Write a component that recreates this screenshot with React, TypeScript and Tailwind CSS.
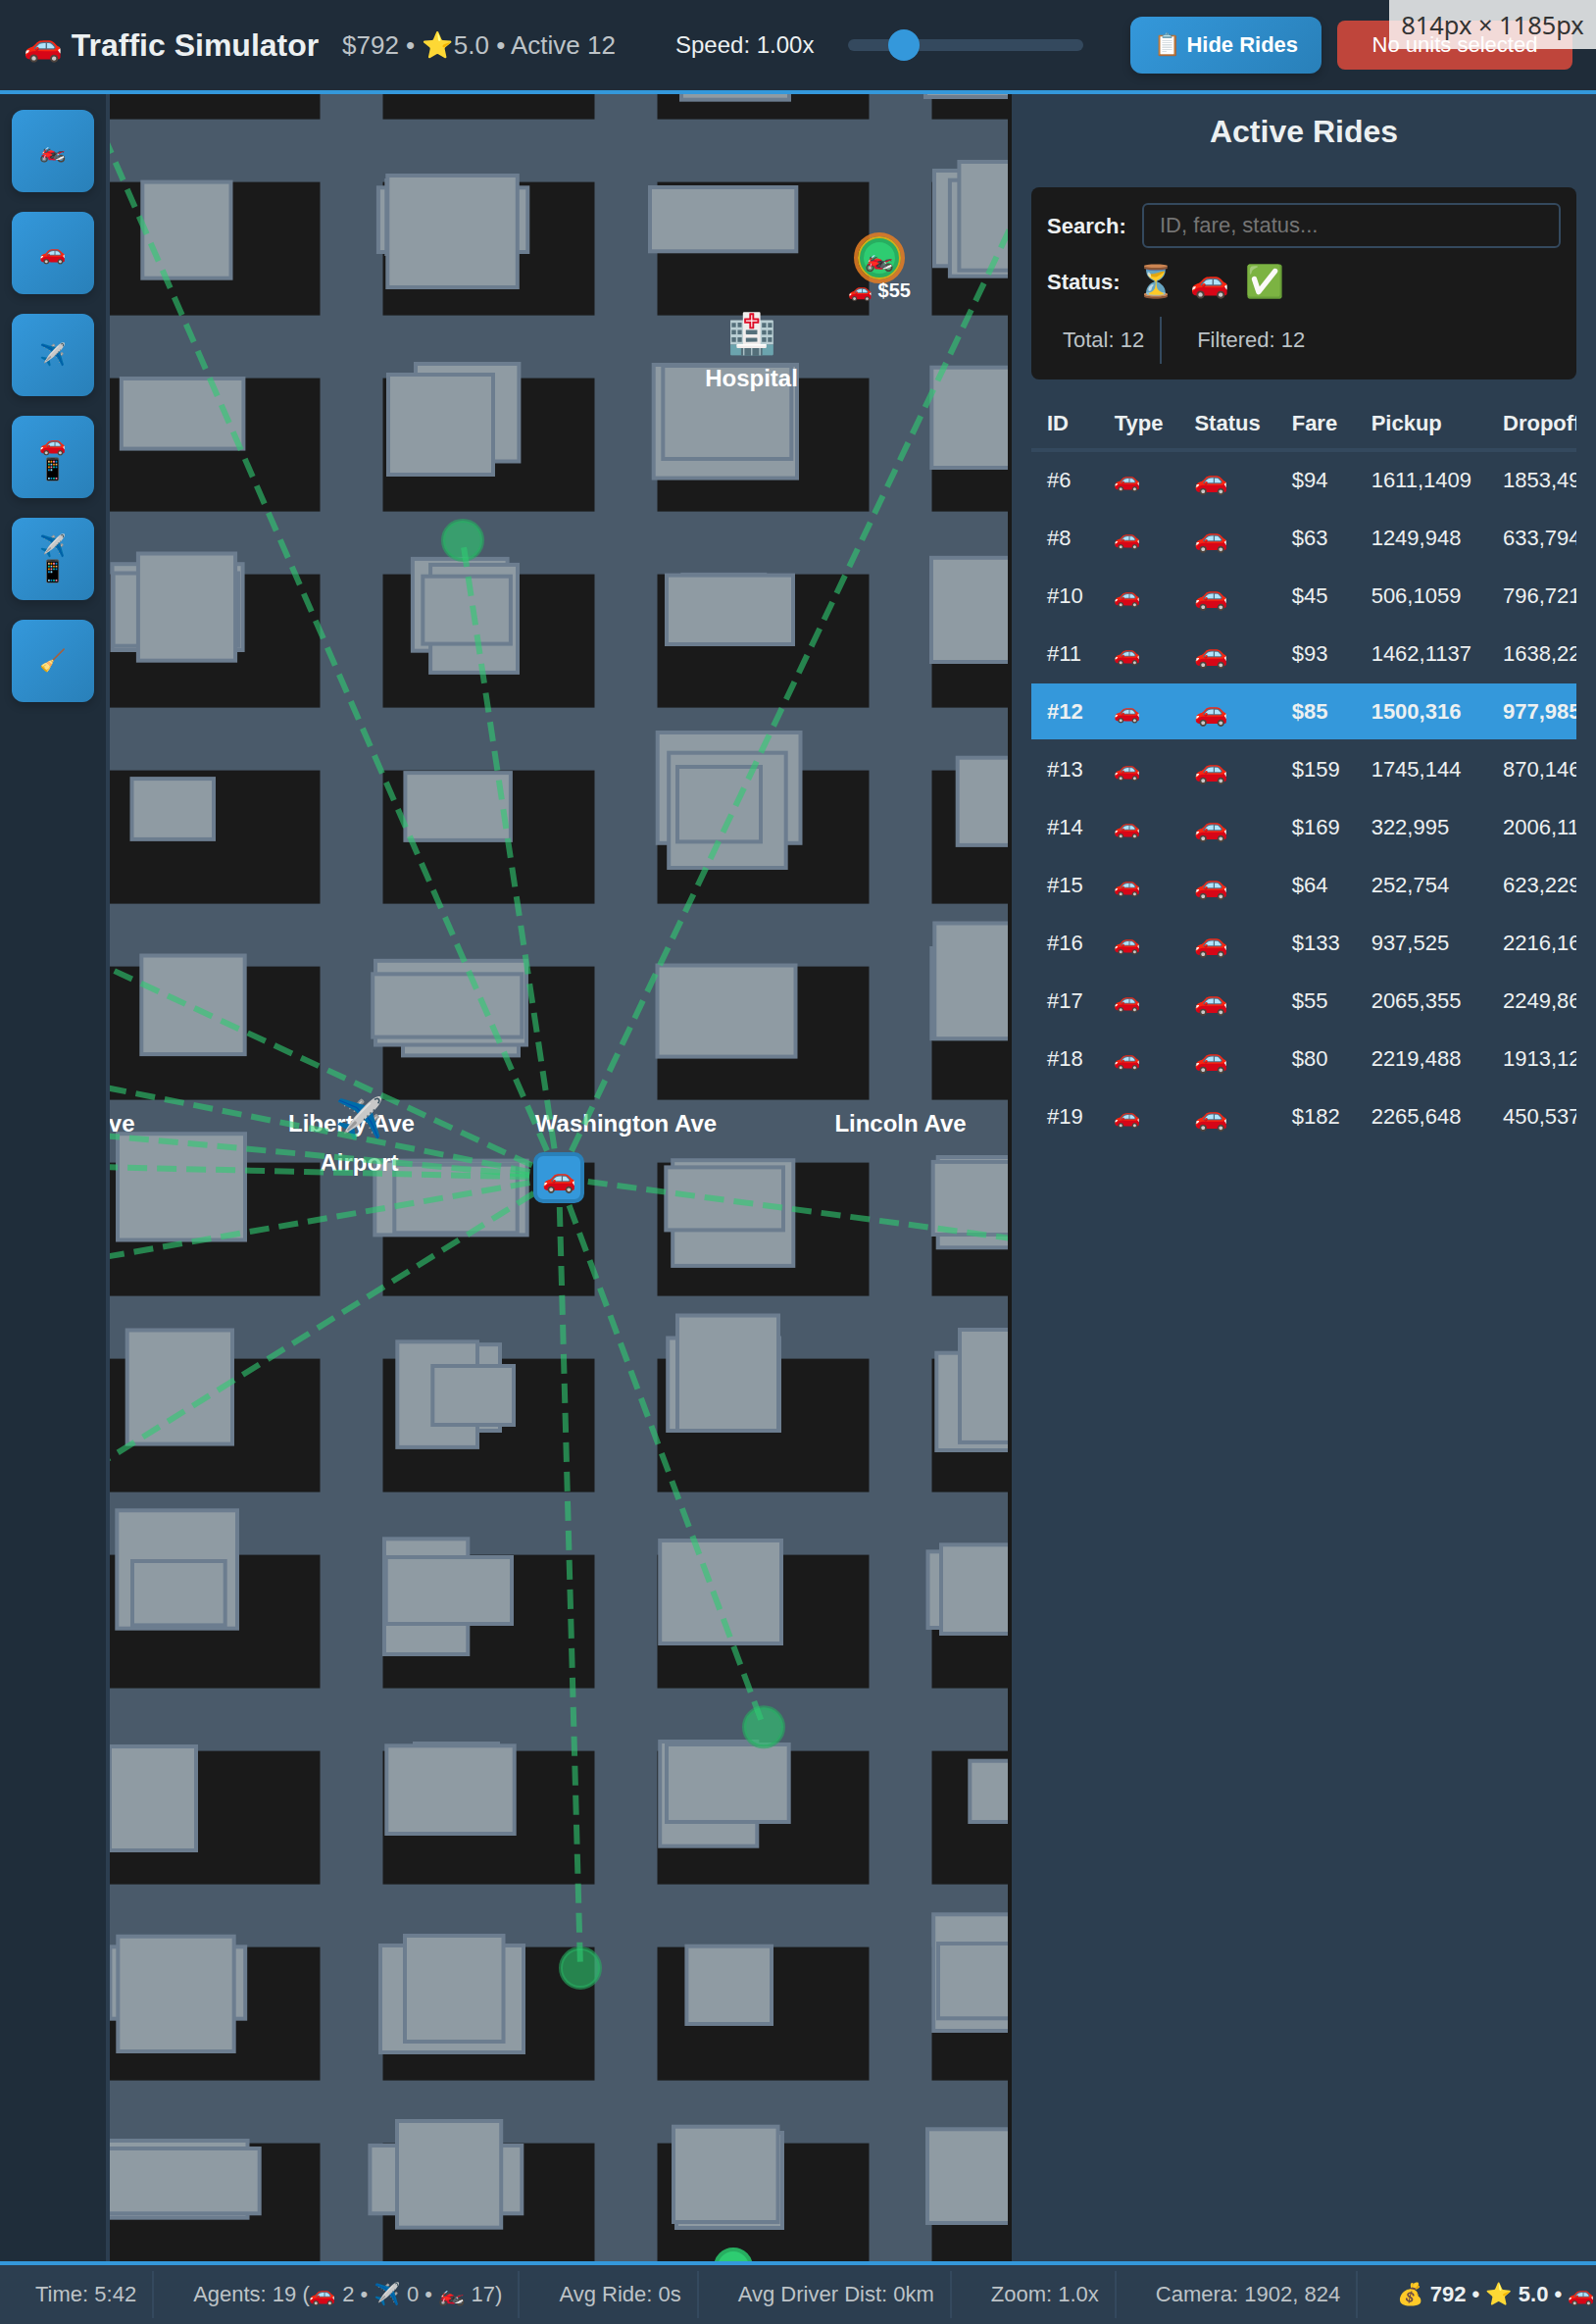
import React from 'react';

type Box = [number, number, number, number];

// Map geometry, in page pixels: left, top, right, bottom of every footprint, back to front.
const BUILDINGS: Box[] = [
  [143.3, 183.6, 237.5, 285.7],
  [121.8, 384, 250.4, 459.6],
  [112.5, 573.2, 249.6, 665],
  [113.6, 582.5, 245, 660.7],
  [138.9, 562.5, 242.1, 675.7],
  [132.5, 792.1, 220, 857.9],
  [142.3, 972.5, 251.7, 1077.1],
  [118, 1154.2, 252, 1266.5],
  [127.7, 1354.5, 239, 1474.6],
  [117.3, 1538.3, 244, 1662.7],
  [133, 1590, 231.7, 1659.4],
  [110, 1779, 202, 1889],
  [110.4, 1983.3, 252.2, 2060.7],
  [118.3, 1972.7, 240.7, 2094],
  [90, 2181, 254.5, 2263.7],
  [90, 2189, 266.7, 2259.3],

  [383.9, 189.3, 540.3, 259],
  [392.3, 182, 520, 261],
  [393.3, 177, 529.8, 295],
  [422, 369, 531.4, 472.5],
  [394, 380, 505, 486],
  [418.9, 567.9, 519.6, 665.7],
  [437.1, 573.9, 530, 687.9],
  [429.3, 585.7, 522.9, 658.6],
  [411.4, 786.1, 522.9, 858.9],
  [409, 1000, 531, 1078.4],
  [381, 977.8, 539, 1067.5],
  [378.2, 991.3, 534.3, 1059.6],
  [380.3, 1181.6, 539.7, 1261.4],
  [400.3, 1185.7, 529.7, 1259.3],
  [450, 1369.1, 512, 1461],
  [403.3, 1366.3, 489, 1477.9],
  [439.3, 1391, 526, 1455],
  [390, 1567.3, 479.3, 1689],
  [391.7, 1586, 524, 1658],
  [421, 1776, 510, 1850],
  [392.3, 1778.3, 526.7, 1872],
  [386, 1982, 536, 2095],
  [411, 1972, 515.5, 2084],
  [375.4, 2186, 534.3, 2259.3],
  [403, 2161, 513.2, 2273.7],

  [693, 60, 807, 103.7],
  [661, 189, 814.3, 258.3],
  [664.7, 370, 815, 489.6],
  [674.3, 371, 809.3, 470],
  [694.3, 583.9, 782.3, 640],
  [678, 584.6, 811, 659],
  [668.7, 745, 818.5, 861.8],
  [680.2, 765.7, 803.7, 887],
  [689, 780, 778, 860.4],
  [668.5, 982.5, 813.5, 1079.6],
  [684.2, 1181.2, 811.3, 1292.9],
  [677.3, 1188.4, 801, 1256.4],
  [679.2, 1362.5, 797, 1461],
  [689, 1339.5, 796, 1461],
  [671.2, 1569, 799, 1678],
  [671.2, 1774, 774.3, 1884.7],
  [678, 1777, 806.7, 1860],
  [698.4, 1982.7, 789, 2066],
  [688, 2173, 800, 2274],
  [685, 2166.7, 795.5, 2268],

  [942, 60, 1060, 101],
  [951, 172, 1060, 273.3],
  [966.9, 181.7, 1060, 283.7],
  [976.4, 163, 1060, 277.7],
  [948.3, 372.7, 1060, 479],
  [948, 566.8, 1060, 677],
  [974.7, 770.7, 1060, 863.9],
  [948.3, 965, 1060, 1061.2],
  [951.3, 939.5, 1060, 1061.2],
  [954.7, 1178, 1060, 1274.3],
  [949.7, 1182.9, 1060, 1261],
  [953.3, 1377.7, 1060, 1481],
  [977, 1354, 1060, 1472.9],
  [944.5, 1580.3, 1060, 1662],
  [958, 1573.3, 1060, 1668],
  [987.3, 1793.7, 1060, 1860],
  [950.2, 1950.3, 1060, 2073],
  [955, 1980, 1060, 2060.3],
  [944, 2169.3, 1060, 2269],
];

const ROAD_X = [326.5, 606.5, 886.5];
const ROAD_Y = [121.6, 321.6, 521.6, 721.6, 921.6, 1121.6, 1321.6, 1521.6, 1721.6, 1921.6, 2121.6];

// Far end of each dashed route; every one leaves from the selected driver.
const DRIVER = { x: 570, y: 1201 };
const ROUTES: [number, number][] = [
  [31.9, -30.9],
  [472, 551],
  [1085.2, 117.4],
  [1081.6, 1269.6],
  [36.8, 953],
  [64, 1100.3],
  [56.4, 1153.5],
  [54, 1189],
  [61.6, 1289.8],
  [40.4, 1531.1],
  [592, 2007],
  [779, 1761.3],
];
const PICKUPS: [number, number][] = [
  [472, 551],
  [592, 2007],
  [779, 1761.3],
];

const RIDES = [
  ['#6', '$94', '1611,1409', '1853,49'],
  ['#8', '$63', '1249,948', '633,794'],
  ['#10', '$45', '506,1059', '796,721'],
  ['#11', '$93', '1462,1137', '1638,22'],
  ['#12', '$85', '1500,316', '977,985'],
  ['#13', '$159', '1745,144', '870,146'],
  ['#14', '$169', '322,995', '2006,11'],
  ['#15', '$64', '252,754', '623,229'],
  ['#16', '$133', '937,525', '2216,16'],
  ['#17', '$55', '2065,355', '2249,86'],
  ['#18', '$80', '2219,488', '1913,12'],
  ['#19', '$182', '2265,648', '450,537'],
];

const TOOLS = [['🏍️'], ['🚗'], ['✈️'], ['🚗', '📱'], ['✈️', '📱'], ['🧹']];

function CityMap() {
  return (
    <svg
      className="block h-[2210px] w-[916px] shrink-0 bg-[#1a1a1a] font-['Liberation_Sans','Noto_Color_Emoji',sans-serif]"
      viewBox="112 96 916 2210"
    >
      {ROAD_Y.map((y) => (
        <rect key={y} x={112} y={y} width={916} height={64} fill="#4a5a6a" />
      ))}
      {ROAD_X.map((x) => (
        <rect key={x} x={x} y={96} width={64} height={2210} fill="#4a5a6a" />
      ))}
      {BUILDINGS.map(([l, t, r, b], i) => (
        <rect
          key={i}
          x={l + 2}
          y={t + 2}
          width={r - l - 4}
          height={b - t - 4}
          fill="#8f9ba3"
          stroke="#6c7d8f"
          strokeWidth={4}
        />
      ))}
      <g fill="#fff" fontSize={24} fontWeight={700} textAnchor="middle">
        <text x={137.5} y={1154} textAnchor="end">Ave</text>
        <text x={358.5} y={1154}>Liberty Ave</text>
        <text x={638.5} y={1154}>Washington Ave</text>
        <text x={918.5} y={1154}>Lincoln Ave</text>
        <text x={767} y={354} fontSize={40} fontWeight={400}>🏥</text>
        <text x={766.5} y={394}>Hospital</text>
        <text x={367} y={1154} fontSize={40} fontWeight={400}>✈️</text>
        <text x={366.5} y={1194}>Airport</text>
      </g>
      <g fill="#2ecc71" fillOpacity={0.6} stroke="#27ae60" strokeOpacity={0.6} strokeWidth={4}>
        {PICKUPS.map(([x, y]) => (
          <circle key={y} cx={x} cy={y} r={20} />
        ))}
      </g>
      <g stroke="#2ecc71" strokeOpacity={0.6} strokeWidth={6} strokeDasharray="20 10">
        {ROUTES.map(([x, y]) => (
          <line key={y} x1={DRIVER.x} y1={DRIVER.y} x2={x} y2={y} />
        ))}
      </g>
      <circle cx={748} cy={2312} r={18} fill="#2ecc71" stroke="#27ae60" strokeWidth={4} />
      <circle cx={897} cy={263} r={24} fill="none" stroke="#e67e22" strokeOpacity={0.85} strokeWidth={4} />
      <circle cx={897} cy={263} r={20} fill="none" stroke="#d4ac17" strokeWidth={4} />
      <circle cx={897} cy={263} r={18} fill="#2ecc71" stroke="#27ae60" strokeWidth={4} />
      <g fill="#fff" textAnchor="middle">
        <text x={897} y={272} fontSize={24}>🏍️</text>
        <text x={897} y={303} fontSize={20} fontWeight={700}>🚗 $55</text>
      </g>
      <rect x={546} y={1177} width={48} height={48} rx={8} fill="#3498db" stroke="#2980b9" strokeWidth={4} />
      <text x={570.5} y={1211} fontSize={28} textAnchor="middle">🚗</text>
    </svg>
  );
}

function Header() {
  return (
    <header className="relative flex h-24 shrink-0 items-center border-b-4 border-[#3498db] bg-[#1f2c39] pl-6 whitespace-nowrap">
      <h1 className="w-[325px] shrink-0 text-[32px] leading-none font-bold">🚗 Traffic Simulator</h1>
      <div className="w-[340px] shrink-0 text-[26px] leading-none text-[#bdc3c7]">$792 • ⭐5.0 • Active 12</div>
      <div className="w-[176px] shrink-0 text-[24px] leading-none">Speed: 1.00x</div>
      <div className="flex h-3 w-[240px] shrink-0 items-center rounded-full bg-[#34495e]">
        <div className="ml-[41px] h-8 w-8 rounded-full bg-[#3498db]" />
      </div>
      <button className="ml-12 flex h-[58px] w-[195px] shrink-0 items-center justify-center rounded-xl bg-linear-135 from-[#3498db] to-[#2980b9] text-[22px] leading-none font-bold text-white shadow-[0_4px_8px_rgba(0,0,0,0.2)]">
        📋 Hide Rides
      </button>
      <div className="ml-4 flex h-[50px] w-[240px] shrink-0 items-center justify-center rounded-lg bg-[#e74c3c]/80 text-[22px] leading-none text-white">
        No units selected
      </div>
      <div className="absolute top-0 right-0 flex h-[50px] w-[211px] items-center justify-center bg-white/80 font-['Noto_Sans',sans-serif] text-[25.4px] text-[#333]">
        814px × 1185px
      </div>
    </header>
  );
}

function Toolbar() {
  return (
    <nav className="flex w-28 shrink-0 flex-col gap-5 border-r-4 border-[#2c3e50] bg-[#1f2d3a] px-3 pt-4">
      {TOOLS.map((glyphs, i) => (
        <button
          key={i}
          className="flex h-[84px] w-[84px] flex-col items-center justify-center rounded-xl bg-linear-135 from-[#3498db] to-[#2980b9] text-[22px] leading-[26px] shadow-[0_4px_8px_rgba(0,0,0,0.2)]"
        >
          {glyphs.map((g) => (
            <span key={g}>{g}</span>
          ))}
        </button>
      ))}
    </nav>
  );
}

function RidesPanel() {
  return (
    <aside className="min-w-0 flex-1 border-l-4 border-[#1a1a1a] bg-[#2c3e50] px-5">
      <h2 className="pt-[19px] text-center text-[32px] leading-[38px] font-bold">Active Rides</h2>
      <section className="mt-[38px] h-[196px] rounded-lg bg-[#1a1a1a] px-4 pt-4">
        <div className="flex items-center">
          <label className="w-[97px] text-[22px] font-bold">Search:</label>
          <input
            className="h-[46px] w-[427px] rounded-md border-2 border-[#34495e] bg-[#1a1a1a] px-4 text-[22px] placeholder:text-[#757575]"
            placeholder="ID, fare, status..."
          />
        </div>
        <div className="mt-3.5 flex h-10 items-center">
          <span className="w-[91px] text-[22px] font-bold">Status:</span>
          <span className="flex gap-4 text-[32px] leading-none">
            <span>⏳</span>
            <span>🚗</span>
            <span>✅</span>
          </span>
        </div>
        <div className="mt-4 flex h-12 gap-5 text-[22px] leading-[48px] text-[#bdc3c7]">
          <div className="border-r-2 border-[#34495e] px-4">Total: 12</div>
          <div className="px-4">Filtered: 12</div>
        </div>
      </section>
      <div className="mt-4 overflow-hidden">
        <table className="w-max border-separate border-spacing-0 text-left text-[22px] leading-[26px] whitespace-nowrap">
          <thead>
            <tr className="h-[58px]">
              {['ID', 'Type', 'Status', 'Fare', 'Pickup', 'Dropoff'].map((h) => (
                <th key={h} className="border-b-4 border-[#34495e] px-4 pt-[3px] pb-0">{h}</th>
              ))}
            </tr>
          </thead>
          <tbody>
            {RIDES.map(([id, fare, from, to]) => (
              <tr key={id} className={id === '#12' ? 'h-[59px] bg-[#3498db] bg-clip-padding font-bold' : 'h-[59px]'}>
                <td className="border-b-2 border-[#2c3e50] px-4 py-0">{id}</td>
                <td className="border-b-2 border-[#2c3e50] px-4 py-0">🚗</td>
                <td className="border-b-2 border-[#2c3e50] px-4 py-0 text-[28px]">🚗</td>
                <td className="border-b-2 border-[#2c3e50] px-4 py-0">{fare}</td>
                <td className="border-b-2 border-[#2c3e50] px-4 py-0">{from}</td>
                <td className="border-b-2 border-[#2c3e50] px-4 py-0">{to}</td>
              </tr>
            ))}
          </tbody>
        </table>
      </div>
    </aside>
  );
}

function StatusBar() {
  const items = [
    'Time: 5:42',
    'Agents: 19 (🚗 2 • ✈️ 0 • 🏍️ 17)',
    'Avg Ride: 0s',
    'Avg Driver Dist: 0km',
    'Zoom: 1.0x',
    'Camera: 1902, 824',
  ];
  return (
    <footer className="flex h-16 shrink-0 items-center gap-6 overflow-hidden border-t-4 border-[#3498db] bg-[#2c3e50] pl-5 text-[22px] leading-[48px] whitespace-nowrap text-[#bdc3c7]">
      {items.map((t) => (
        <div key={t} className="h-12 shrink-0 border-r-2 border-[#34495e] px-4">{t}</div>
      ))}
      <div className="h-12 shrink-0 px-4 font-bold text-[#ecf0f1]">💰 792 • ⭐ 5.0 • 🚗</div>
    </footer>
  );
}

export default function App() {
  return (
    <div className="flex h-[2370px] w-[1628px] flex-col overflow-hidden bg-[#1a1a1a] font-['Liberation_Sans','Noto_Color_Emoji',sans-serif] text-[#ecf0f1]">
      <Header />
      <main className="flex h-[2210px] shrink-0">
        <Toolbar />
        <CityMap />
        <RidesPanel />
      </main>
      <StatusBar />
    </div>
  );
}
